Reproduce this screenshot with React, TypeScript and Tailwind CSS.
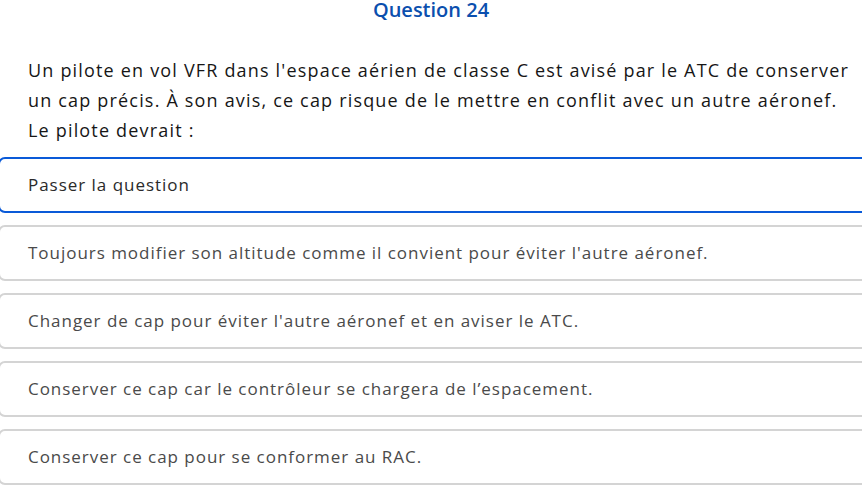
import * as React from "react";

const options = [
  "Passer la question",
  "Toujours modifier son altitude comme il convient pour éviter l'autre aéronef.",
  "Changer de cap pour éviter l'autre aéronef et en aviser le ATC.",
  "Conserver ce cap car le contrôleur se chargera de l’espacement.",
  "Conserver ce cap pour se conformer au RAC.",
];

export default function App() {
  const selected = 0;

  return (
    <div
      className="h-[495px] w-[862px] overflow-hidden bg-white"
      style={{ fontFamily: '"Open Sans", "Noto Sans", sans-serif' }}
    >
      <h1 className="text-center text-[20px] leading-[19px] font-semibold text-[#0b4fae]">
        Question 24
      </h1>

      <p className="mt-[36px] pl-[28px] pr-[3px] text-[18px] leading-[30px] tracking-[1.18px] text-[#161616]">
        Un pilote en vol VFR dans l'espace aérien de classe C est avisé par le ATC de conserver
        un cap précis. À son avis, ce cap risque de le mettre en conflit avec un autre aéronef.
        Le pilote devrait :
      </p>

      <div className="-ml-[2px] mt-[12px] flex w-[880px] flex-col gap-[12px]">
        {options.map((label, index) => (
          <div
            key={label}
            className={
              index === selected
                ? "flex h-[56px] items-center rounded-[7px] border-2 border-[#0a5ad8] pl-[28px] text-[17px] tracking-[0.97px] text-[#2a2a2a]"
                : "flex h-[56px] items-center rounded-[7px] border-2 border-[#d4d4d4] pl-[28px] text-[17px] tracking-[0.97px] text-[#4a4a4a]"
            }
          >
            {label}
          </div>
        ))}
      </div>
    </div>
  );
}
